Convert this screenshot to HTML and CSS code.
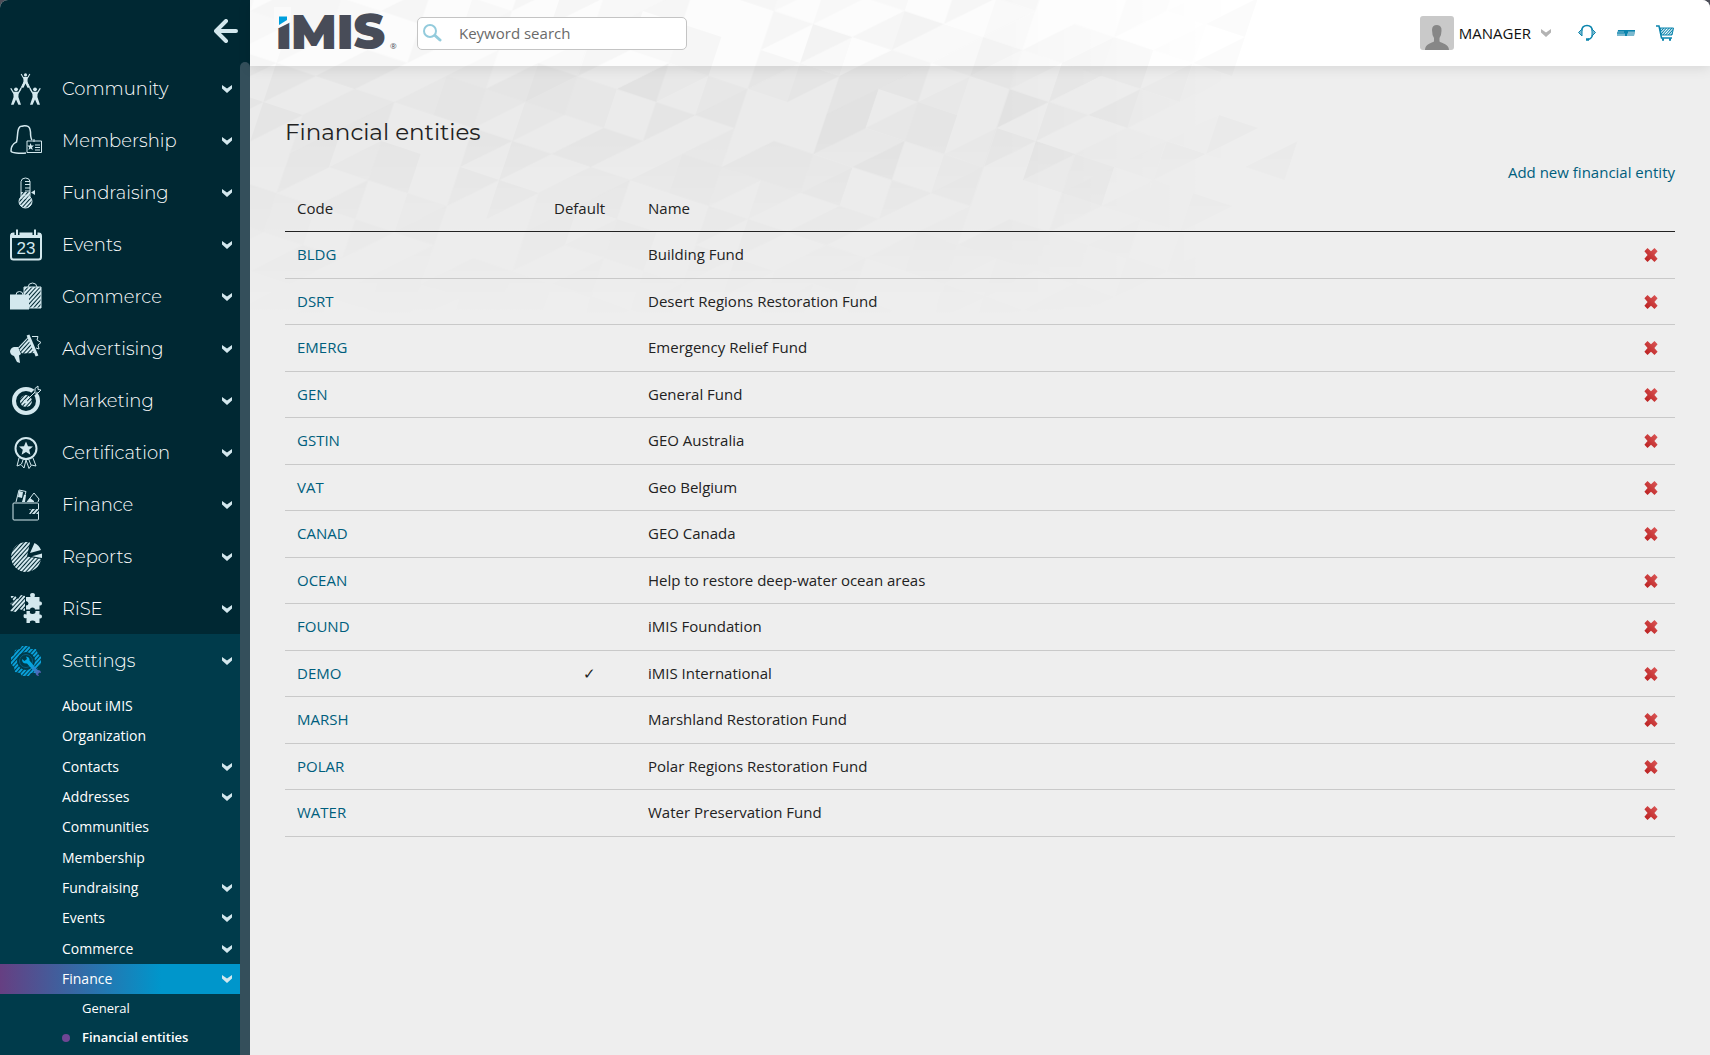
FILE: index.html
```html
<!DOCTYPE html>
<html lang="en">
<head>
<meta charset="utf-8">
<title>Financial entities</title>
<link rel="stylesheet" href="styles.css">
</head>
<body>
<svg class="defs" aria-hidden="true">
  <defs>
    <pattern id="hatch" width="3" height="3" patternUnits="userSpaceOnUse" patternTransform="rotate(42)">
      <rect width="2" height="3" fill="#d3e8ee"/>
    </pattern>
    <pattern id="hatch-blue" width="3" height="3" patternUnits="userSpaceOnUse" patternTransform="rotate(42)">
      <rect width="2" height="3" fill="#0a9fd8"/>
    </pattern>
    <pattern id="hatch-teal" width="2" height="2" patternUnits="userSpaceOnUse" patternTransform="rotate(42)">
      <rect width="1" height="2" fill="#0a84ad"/>
    </pattern>
    <linearGradient id="cross-fill" x1="1" y1="0" x2="0" y2="1">
      <stop offset="0" stop-color="#dc5a5a"/><stop offset="1" stop-color="#b81c1c"/>
    </linearGradient>
    <linearGradient id="tool-fill" x1="0" y1="0" x2="1" y2="1">
      <stop offset=".45" stop-color="#00a7e1"/><stop offset="1" stop-color="#6f4fa8"/>
    </linearGradient>
    <symbol id="chevron" viewBox="0 0 10 8"><path d="M0 0 5 3.5 10 0V3.5L5 8 0 3.5z"/></symbol>
    <symbol id="cross" viewBox="0 0 14 14"><path d="M3.500 0 7 3.300 10.500 0 13.600 3.300 10.400 7 13.600 10.700 10.500 14 7 10.700 3.500 14 .4 10.700 3.600 7 .4 3.300z" fill="url(#cross-fill)"/></symbol>
    <symbol id="person" viewBox="0 0 12 18"><circle cx="6" cy="2.300" r="1.900"/><path d="M.2 1.400 1.300 1 3.600 4.800H8.400L10.700 1 11.800 1.400 8.600 7 8.400 10 11 17.800H8.400L6 12.500 3.600 17.800H1L3.600 10 3.400 7z"/></symbol>
  </defs>
</svg>
<div class="app">
  <aside class="sidebar">
    <div class="sidebar-top">
      <button class="collapse" type="button" aria-label="Collapse menu">
        <svg width="24" height="24" viewBox="0 0 24 24" fill="none" stroke="#d3e8ee" stroke-width="4" stroke-linecap="round" stroke-linejoin="round"><path d="M12 2 2 12 12 22M3 12H22"/></svg>
      </button>
    </div>
    <div class="sidebar-body">
      <nav class="menu" aria-label="Main">
        <a class="item" href="#"><svg class="icon" viewBox="0 0 32 32"><use href="#person" x="10" y="0" width="11" height="15"/><use href="#person" x="0" y="14" width="12" height="18"/><use href="#person" x="19" y="14" width="12" height="18"/><path d="M13 11 9 19M18 11 22 19" stroke="#d3e8ee" stroke-width="1"/></svg><span>Community</span><svg class="chev"><use href="#chevron"/></svg></a>
        <a class="item" href="#"><svg class="icon line" viewBox="0 0 32 32"><path d="M16 28C10 28.500 1 28 1 26C1 20 4 18.500 6.500 17C8 12 7 6 9 3Q10 .8 12 1.200Q14 .4 17 1Q20 1.500 20.500 7Q20.500 13 22 15" stroke-width="1.500"/><path d="M17 16H31.500V27.500H17zM24 14V17M25 20H30M25 22.500H30M25 25H30"/><path class="solid" d="m20.500 18 1 2.500h2.500l-2 1.800.8 2.700-2.300-1.500-2 1.500.7-2.700-2-1.800h2.500z"/></svg><span>Membership</span><svg class="chev"><use href="#chevron"/></svg></a>
        <a class="item" href="#"><svg class="icon line" viewBox="0 0 32 32"><circle cx="15.500" cy="24.500" r="6.500" fill="url(#hatch)"/><path d="M11 20V4.500Q11.500 1 15.500 1T20 4.500V20" fill="none"/><path d="M11 15H20V22H11z" fill="url(#hatch)" stroke="none"/><path d="M15 4.500H20M15 7.500H20M15 11H20M15 14H20"/><path class="solid" d="M21 15.500 25 13V18z"/></svg><span>Fundraising</span><svg class="chev"><use href="#chevron"/></svg></a>
        <a class="item" href="#"><svg class="icon" viewBox="0 0 32 32"><rect x="1" y="4.500" width="30" height="26" rx="2.500" fill="none" stroke="#d3e8ee" stroke-width="2"/><path d="M1 4H31V9H1z"/><path d="M7 0V6M25 0V6" stroke="#002833" stroke-width="5"/><path d="M7 .5V6M25 .5V6" stroke="#d3e8ee" stroke-width="2"/><text x="16" y="25" text-anchor="middle" class="cal">23</text></svg><span>Events</span><svg class="chev"><use href="#chevron"/></svg></a>
        <a class="item" href="#"><svg class="icon line" viewBox="0 0 32 32"><path d="M14 6H31V27H14z" fill="url(#hatch)"/><path d="M18 6Q18.500 2 22.500 2T27 6M6 14Q6 10.500 9.500 10.500T13 14"/><path class="solid" d="M0 13.500H19V28.500H0z"/></svg><span>Commerce</span><svg class="chev"><use href="#chevron"/></svg></a>
        <a class="item" href="#"><svg class="icon line" viewBox="0 0 32 32"><path d="M8 14.500 18 4 25 20 12 20.500z" fill="url(#hatch)" stroke="none"/><path d="M18 2 27 23" stroke-width="3"/><path class="solid" d="M0 18Q1 14.500 4 14H8L11 21 9 22.500 10 30 7 29 4 23Q0 22 0 18z"/><path d="M22 3.500H28L27 7 31 9.500 28 12 29 16 26 15"/></svg><span>Advertising</span><svg class="chev"><use href="#chevron"/></svg></a>
        <a class="item" href="#"><svg class="icon line" viewBox="0 0 32 32"><circle cx="16" cy="16" r="12" stroke-width="4" fill="none"/><circle cx="16" cy="16" r="6" fill="url(#hatch)" stroke="none"/><path d="M20 12 26 6" stroke="#002833" stroke-width="4"/><path d="M15.500 16.500 25 7V3.500L28 1V4.500L31 5 28 8H24.500" stroke-width="1"/><circle class="solid" cx="15.500" cy="16.500" r="2"/></svg><span>Marketing</span><svg class="chev"><use href="#chevron"/></svg></a>
        <a class="item" href="#"><svg class="icon line" viewBox="0 0 32 32"><circle cx="16" cy="11.500" r="10.500" fill="none" stroke-width="2"/><path class="solid" d="m16 4.500 2 4.700 5 .4-3.800 3.200 1.200 5-4.400-2.800-4.400 2.800 1.200-5L9 9.600l5-.4z"/><path d="M9 21 7 29 11 27.500 14 31 16 23 19 31.500 21.500 28 26 29 23 21M13 23 11.500 27M19 23 21 28"/></svg><span>Certification</span><svg class="chev"><use href="#chevron"/></svg></a>
        <a class="item" href="#"><svg class="icon line" viewBox="0 0 32 32"><path d="M28.500 20V15Q28.500 14 27.500 14H4Q3 14 3 15V30Q3 31 4 31H27.500Q28.500 31 28.500 30V25"/><path d="M19 20H29V25H19L21 22z" fill="url(#hatch)" stroke="none"/><path d="M6 13 9 1 16 2.500 13 13M17 13 24 4 29 10 28 13"/><path class="solid" d="M9 2 13 3 12 9 8 8zM14 6H16L15 13H12zM17 13 20 9 24 12V13z"/></svg><span>Finance</span><svg class="chev"><use href="#chevron"/></svg></a>
        <a class="item" href="#"><svg class="icon line" viewBox="0 0 32 32"><path d="M17 15.500 20 1.500A15 15 0 1 0 31 18z" fill="url(#hatch)" stroke="none"/><path class="solid" d="M20 12 24.500 2Q29 4 31 9zM22 15.200 32 12.500V17z"/></svg><span>Reports</span><svg class="chev"><use href="#chevron"/></svg></a>
        <a class="item" href="#"><svg class="icon" viewBox="0 0 32 32"><path d="M0 3H5L8 6 11 2 15 3V18L9 16 6 19 0 18 3 13 0 11 4 8z" fill="url(#hatch)"/><path d="M16 4H20.500Q19 0 22.500 0T24.500 4H29.500V8.500Q32 8 32 10.500T29.500 12.500V16.500H25Q25 14.500 22.500 14.500T20 16.500H16V12.500Q18.500 12.500 18.500 10.500T16 8z"/><path d="M16.500 18H20Q19 21 22.500 21T25.500 18H29.500V21.500Q32 21 32 23.500T29.500 25.500V30H25.500Q26 27.500 22.500 27.500T20 30H16.500V25Q13.500 26 13.500 23T16.500 21.500z"/></svg><span>RiSE</span><svg class="chev"><use href="#chevron"/></svg></a>
        <section class="open">
          <a class="item" href="#"><svg class="icon" viewBox="0 0 32 32"><path d="M10 4 12 1 19 1 21 4 26 4 28 9 31 12V19L28 22 26 28 21 28 19 31H12L10 28 5 27 4 22 1 19V12L4 10 5 5zM16 7A9 9 0 1 0 16 25 9 9 0 1 0 16 7" fill="url(#hatch-blue)" fill-rule="evenodd"/><circle cx="16" cy="16" r="6.500" fill="none" stroke="#075c80"/><path d="M12 14 14.500 16 17 14 16 11.500Q20 12 19.500 15.500L27.500 25Q31 25 31 28L29.500 27.500 28 29 29 31Q26 31 25.500 28L17 18.500Q12 19 12 14z" fill="url(#tool-fill)"/></svg><span>Settings</span><svg class="chev"><use href="#chevron"/></svg></a>
          <div class="submenu">
            <a class="subitem" href="#"><span>About iMIS</span></a>
            <a class="subitem" href="#"><span>Organization</span></a>
            <a class="subitem" href="#"><span>Contacts</span><svg class="chev"><use href="#chevron"/></svg></a>
            <a class="subitem" href="#"><span>Addresses</span><svg class="chev"><use href="#chevron"/></svg></a>
            <a class="subitem" href="#"><span>Communities</span></a>
            <a class="subitem" href="#"><span>Membership</span></a>
            <a class="subitem" href="#"><span>Fundraising</span><svg class="chev"><use href="#chevron"/></svg></a>
            <a class="subitem" href="#"><span>Events</span><svg class="chev"><use href="#chevron"/></svg></a>
            <a class="subitem" href="#"><span>Commerce</span><svg class="chev"><use href="#chevron"/></svg></a>
            <a class="subitem active" href="#"><span>Finance</span><svg class="chev"><use href="#chevron"/></svg></a>
          </div>
          <a class="leaf" href="#">General</a>
          <a class="leaf current" href="#" aria-current="page">Financial entities</a>
        </section>
      </nav>
      <div class="scroll-thumb"></div>
    </div>
  </aside>
  <div class="page">
    <svg class="mesh" width="1120" height="340" viewBox="250 0 1120 340" aria-hidden="true">
      <defs>
        <pattern id="facets" width="6" height="5" patternUnits="userSpaceOnUse">
          <path fill-opacity=".01" d="M0 0h6v5h-6z"/>
          <path fill-opacity=".022" d="M0 0h1l-1 1zM2 0v1h-1zM3 0h1v1h-1zM5 0h1l-1 1zM1 1h1l-1 1zM3 1v1h-1zM5 1v1h-1zM0 2h1v1h-1zM3 2h1l-1 1zM6 2v1h-1zM2 3v1h-1zM2 3h1l-1 1zM4 3h1v1h-1zM0 4h1l-1 1zM3 4v1h-1zM5 4h1l-1 1z"/>
          <path fill-opacity=".016" d="M1 0h1l-1 1zM3 0v1h-1zM4 1h1l-1 1zM1 2h1v1h-1zM5 2v1h-1zM0 3h1l-1 1zM4 3v1h-1zM5 3h1l-1 1zM2 4h1l-1 1zM2 4v1h-1z"/>
        </pattern>
        <linearGradient id="fade-x" x1="250" x2="1320" y1="0" y2="0" gradientUnits="userSpaceOnUse"><stop offset=".7" stop-color="#fff"/><stop offset=".92" stop-color="#000"/></linearGradient>
        <linearGradient id="fade-y" x1="0" x2="0" y1="0" y2="340" gradientUnits="userSpaceOnUse"><stop offset=".4" stop-color="#fff"/><stop offset=".95" stop-color="#000"/></linearGradient>
        <mask id="mask-x" maskUnits="userSpaceOnUse" x="250" y="0" width="1120" height="340"><rect x="250" width="1120" height="340" fill="url(#fade-x)"/></mask>
        <mask id="mask-y" maskUnits="userSpaceOnUse" x="250" y="0" width="1120" height="340"><rect x="250" width="1120" height="340" fill="url(#fade-y)"/></mask>
      </defs>
      <g mask="url(#mask-y)">
        <g mask="url(#mask-x)"><path transform="matrix(39.300 13 -13 39 800 63)" fill="url(#facets)" d="M-16-10H16V14H-16z"/></g>
        <path transform="matrix(39.300 13 -13 39 800 63)" fill-opacity=".014" d="M1 0h1v2h-1zM2 1h1v1h-1zM4-1v1h-1zM5-1h1l-1 1zM5 0v1h-1zM8-2v1h-1zM6-2h1l-1 1zM8-3v1h-1zM9-3v1h-1zM7-3h1l-1 1zM7-3v1h-1zM9-1h1l-1 1zM10-5v1h-1zM12-2v1h-1zM10-2h1l-1 1zM10 0h1l-1 1zM0 0v1h-1zM2-1v1h-1zM2-1h1l-1 1zM2 2v1h-1zM0-1h1v1h-1zM2-2h1v1h-1zM3-2h1l-1 1zM4-2h1l-1 1zM4-3h1l-1 1zM6 0h2v1h-2zM-6 2h1l-1 1zM-5 1v1h-1zM-3 1h1l-1 1zM-3 1v1h-1zM10-4v1h-1z"/>
      </g>
    </svg>
    <header class="topbar">
      <a class="logo" href="#" aria-label="iMIS home">
        <svg width="120" height="40" viewBox="0 0 120 40">
          <text y="36" class="word"><tspan x="-1">i</tspan><tspan x="14">MIS</tspan></text>
          <path d="M-3-6H14V9L2 15H-3z" fill="#fafafa"/><path d="M2 3.500H10V7L2 12z" fill="#009fdd"/>
          <text x="113" y="36" class="reg">®</text>
        </svg>
      </a>
      <form class="search">
        <svg width="19" height="18" viewBox="0 0 19 18" fill="none" stroke="#93cbdc" stroke-width="2" stroke-linecap="round" aria-hidden="true"><circle cx="7" cy="7" r="6"/><path d="m12 11.500 5 4.500" stroke-width="3"/></svg>
        <input type="search" placeholder="Keyword search" aria-label="Keyword search">
      </form>
      <div class="user">
        <svg class="avatar" width="34" height="34" viewBox="0 0 34 34" aria-hidden="true"><rect width="34" height="34" fill="#c9c9c9"/><path d="M5 34C5 28 12 27 14 25.500V22Q12 19 12 14Q12 9 17 9Q22 9.500 21.500 15Q21.500 19 19.500 22V25.500C22 27.500 29 28 29 34z" fill="#878787"/></svg>
        <button class="account" type="button">MANAGER<svg class="chev"><use href="#chevron"/></svg></button>
        <a href="#" aria-label="Support"><svg width="18" height="18" viewBox="0 0 18 18" fill="none" stroke="#0a84ad" stroke-width="1.500"><path d="M3.500 7Q4 1.500 9 1.500T14.500 7M14.500 11Q14 14.500 10 15.500"/><path d="M.5 8.500 4 5V12zM17.500 8.500 14 5V12z" stroke-width="1" fill="#7bb9cf"/><path d="M8 15.500H11" stroke-width="2.500"/></svg></a>
        <a href="#" aria-label="Switch view"><svg width="18" height="18" viewBox="0 0 18 18"><path d="M1 6H18V9L17 12H0V9z" fill="#7bb9cf"/><path d="M1 6H18V7.500H1zM0 8.500H8V9.500H0zM7 7H11V9.500H7zM8 6H10V12H8z" fill="#0a84ad"/></svg></a>
        <a href="#" aria-label="Cart"><svg width="18" height="18" viewBox="0 0 18 18" fill="none" stroke="#0a84ad"><path d="M0 2H3L5.500 14H16" stroke-width="1.500"/><path d="M4 4H17.500L16 11H5z" fill="url(#hatch-teal)"/><path d="M6 15.500H8M13 15.500H15" stroke-width="2.500"/></svg></a>
      </div>
    </header>
    <main class="content">
      <h1>Financial entities</h1>
      <div class="actions"><a href="#">Add new financial entity</a></div>
      <table class="grid">
        <colgroup><col class="c-code"><col class="c-default"><col><col class="c-del"></colgroup>
        <thead><tr><th scope="col">Code</th><th scope="col">Default</th><th scope="col">Name</th><td></td></tr></thead>
        <tbody>
          <tr><td><a href="#">BLDG</a></td><td></td><td>Building Fund</td><td><button type="button" aria-label="Delete BLDG"><svg><use href="#cross"/></svg></button></td></tr>
          <tr><td><a href="#">DSRT</a></td><td></td><td>Desert Regions Restoration Fund</td><td><button type="button" aria-label="Delete DSRT"><svg><use href="#cross"/></svg></button></td></tr>
          <tr><td><a href="#">EMERG</a></td><td></td><td>Emergency Relief Fund</td><td><button type="button" aria-label="Delete EMERG"><svg><use href="#cross"/></svg></button></td></tr>
          <tr><td><a href="#">GEN</a></td><td></td><td>General Fund</td><td><button type="button" aria-label="Delete GEN"><svg><use href="#cross"/></svg></button></td></tr>
          <tr><td><a href="#">GSTIN</a></td><td></td><td>GEO Australia</td><td><button type="button" aria-label="Delete GSTIN"><svg><use href="#cross"/></svg></button></td></tr>
          <tr><td><a href="#">VAT</a></td><td></td><td>Geo Belgium</td><td><button type="button" aria-label="Delete VAT"><svg><use href="#cross"/></svg></button></td></tr>
          <tr><td><a href="#">CANAD</a></td><td></td><td>GEO Canada</td><td><button type="button" aria-label="Delete CANAD"><svg><use href="#cross"/></svg></button></td></tr>
          <tr><td><a href="#">OCEAN</a></td><td></td><td>Help to restore deep-water ocean areas</td><td><button type="button" aria-label="Delete OCEAN"><svg><use href="#cross"/></svg></button></td></tr>
          <tr><td><a href="#">FOUND</a></td><td></td><td>iMIS Foundation</td><td><button type="button" aria-label="Delete FOUND"><svg><use href="#cross"/></svg></button></td></tr>
          <tr><td><a href="#">DEMO</a></td><td>✓</td><td>iMIS International</td><td><button type="button" aria-label="Delete DEMO"><svg><use href="#cross"/></svg></button></td></tr>
          <tr><td><a href="#">MARSH</a></td><td></td><td>Marshland Restoration Fund</td><td><button type="button" aria-label="Delete MARSH"><svg><use href="#cross"/></svg></button></td></tr>
          <tr><td><a href="#">POLAR</a></td><td></td><td>Polar Regions Restoration Fund</td><td><button type="button" aria-label="Delete POLAR"><svg><use href="#cross"/></svg></button></td></tr>
          <tr><td><a href="#">WATER</a></td><td></td><td>Water Preservation Fund</td><td><button type="button" aria-label="Delete WATER"><svg><use href="#cross"/></svg></button></td></tr>
        </tbody>
      </table>
    </main>
  </div>
</div>
</body>
</html>
```
FILE: styles.css
```css
* { box-sizing: border-box; }
html { background: #4c4e58; }
body {
  margin: 0;
  font: 15px/22px "Open Sans", "Noto Sans", sans-serif;
  color: #222;
}
a { color: #005e7d; text-decoration: none; }
button { border: 0; padding: 0; background: none; font: inherit; color: inherit; cursor: pointer; }
svg { display: block; flex: none; }
.defs { position: absolute; width: 0; height: 0; }

.app {
  display: flex;
  min-height: 100vh;
  border-radius: 8px 8px 0 0;
  overflow: hidden;
  background: #eee;
}

/* Sidebar */
.sidebar {
  display: flex;
  flex-direction: column;
  flex: none;
  width: 250px;
  background: #002833;
}
.sidebar-top {
  display: flex;
  justify-content: flex-end;
  align-items: center;
  height: 62px;
  padding-right: 12px;
}
.sidebar-body { display: flex; flex: 1; }
.menu { display: flex; flex-direction: column; flex: 1; }
.scroll-thumb { width: 10px; background: #344f5b; border-radius: 5px 5px 0 0; }
.item {
  display: flex;
  align-items: center;
  gap: 20px;
  height: 52px;
  padding: 2px 8px 0 10px;
  font: 18px/24px Montserrat, Inter, sans-serif;
  font-weight: 300;
  color: #fff;
}
.item span, .subitem span { flex: 1; }
.icon { width: 32px; height: 32px; fill: #d3e8ee; }
.icon.line { fill: none; stroke: #d3e8ee; stroke-width: 1; }
.icon .solid { fill: #d3e8ee; stroke: none; }
.icon .cal { font: 17px "Liberation Sans", sans-serif; }
.chev { width: 10px; height: 8px; fill: #d3e8ee; }
.open { flex: 1; background: #003b4b; }
.submenu { padding-top: 5px; }
.subitem {
  display: flex;
  align-items: center;
  height: 30px;
  padding: 0 8px 0 62px;
  font-size: 14px;
  font-weight: 500;
  color: #fff;
}
.subitem:nth-child(3n+2) { height: 31px; padding-bottom: 1px; }
.subitem.active { background: linear-gradient(90deg, #663f82, #0096cb 67%); }
.leaf {
  display: block;
  height: 29px;
  padding-left: 82px;
  font-size: 13px;
  font-weight: 500;
  line-height: 29px;
  color: #fff;
}
.leaf.current {
  display: flex;
  align-items: center;
  gap: 12px;
  padding-left: 62px;
  font-weight: 600;
}
.leaf.current::before {
  content: "";
  width: 8px;
  height: 8px;
  border-radius: 50%;
  background: #6f4694;
}

/* Page */
.page { position: relative; flex: 1; min-width: 0; }
.mesh { position: absolute; top: 0; left: 0; z-index: 1; pointer-events: none; }
.topbar {
  display: flex;
  align-items: center;
  height: 66px;
  padding: 0 36px 0 27px;
  background: #fff;
  box-shadow: 0 2px 12px rgba(0, 0, 0, .1);
}
.logo, .search, .user { position: relative; z-index: 2; }
.logo { width: 120px; margin-right: 20px; }
.logo svg { overflow: visible; }
.word { font: 900 48px Montserrat, Inter, sans-serif; fill: #484c58; }
.reg { font: 8px "Open Sans", sans-serif; fill: #484c58; }
.search {
  display: flex;
  align-items: center;
  gap: 17px;
  width: 270px;
  height: 33px;
  padding: 0 5px;
  border: 1px solid #c4c4c4;
  border-radius: 5px;
  background: #fff;
}
.search input {
  flex: 1;
  min-width: 0;
  padding: 0;
  border: 0;
  outline: 0;
  background: none;
  font: inherit;
}
.search input::placeholder { color: #6a6a6a; opacity: 1; }
.user { display: flex; align-items: center; gap: 21px; margin-left: auto; }
.avatar { border-radius: 3px; margin-right: -16px; }
.account { display: flex; align-items: center; gap: 10px; margin-right: 6px; color: #111; font-weight: 500; }
.account .chev { fill: #b3b3b3; }

.content { position: relative; z-index: 2; padding: 48px 35px; }
h1 { margin: 0; font: 23px/36px Montserrat, Inter, sans-serif; }
.actions { display: flex; justify-content: flex-end; padding: 11px 0; }
.grid { width: 100%; border-collapse: separate; border-spacing: 0; table-layout: fixed; }
.c-code { width: 257px; }
.c-default { width: 94px; }
.c-del { width: 48px; }
.grid th, .grid td { padding: 0 12px; text-align: left; }
.grid thead th, .grid thead td { height: 38px; padding-bottom: 10px; border-bottom: 1px solid #222; font-weight: 500; }
.grid tbody td { height: 46px; padding-bottom: 2px; border-bottom: 1px solid #c9c9c9; }
.grid tbody tr:nth-child(odd) td { height: 47px; }
.grid tbody td:nth-child(2) { text-align: center; }
.grid tbody td:last-child { padding: 0 17px; }
.grid button { display: block; }
.grid button svg { width: 14px; height: 14px; }
```
